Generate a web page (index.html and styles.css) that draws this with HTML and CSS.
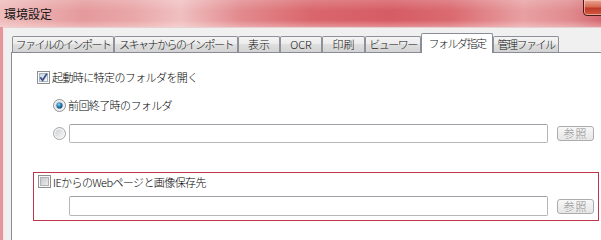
FILE: index.html
```html
<!DOCTYPE html>
<html lang="ja">
<head>
<meta charset="utf-8">
<title>環境設定</title>
<link rel="stylesheet" href="styles.css">
</head>
<body>
<div class="window">
  <div class="titlebar">
    <span class="title">環境設定</span>
    <div class="close"></div>
  </div>
  <div class="frame">
    <div class="client">
      <div class="tabs">
        <div class="tab t1">ファイルのインポート</div>
        <div class="tab t2">スキャナからのインポート</div>
        <div class="tab t3">表示</div>
        <div class="tab t4">OCR</div>
        <div class="tab t5">印刷</div>
        <div class="tab t6">ビューワー</div>
        <div class="tab t7 selected">フォルダ指定</div>
        <div class="tab t8">管理ファイル</div>
      </div>
      <div class="panel">
        <div class="row row-a">
          <svg class="cb" width="13" height="13" viewBox="0 0 13 13">
            <defs><linearGradient id="cbg1" x1="0" y1="0" x2="1" y2="1"><stop offset="0" stop-color="#c9d2e0"/><stop offset="1" stop-color="#f4f6fa"/></linearGradient></defs>
            <rect x="0.5" y="0.5" width="12" height="12" fill="#fafafa" stroke="#8e8f8f"/>
            <rect x="2.5" y="2.5" width="8" height="8" fill="url(#cbg1)" stroke="#a9b3c4"/>
            <path d="M3.3 6.4 L5.6 9.2 L9.8 2.8" fill="none" stroke="#3c4f80" stroke-width="1.7"/>
          </svg>
          <span class="label">起動時に特定のフォルダを開く</span>
        </div>
        <div class="row row-b">
          <svg class="rb" width="13" height="13" viewBox="0 0 13 13">
            <defs>
              <radialGradient id="rdot" cx="0.4" cy="0.35" r="0.7"><stop offset="0" stop-color="#8fd0f5"/><stop offset="0.5" stop-color="#2a7fb8"/><stop offset="1" stop-color="#0d3f6a"/></radialGradient>
              <linearGradient id="rbg1" x1="0" y1="0" x2="1" y2="1"><stop offset="0" stop-color="#c8ccd2"/><stop offset="1" stop-color="#f6f6f6"/></linearGradient>
            </defs>
            <circle cx="6.5" cy="6.5" r="6" fill="#f4f4f4" stroke="#8e8f8f"/>
            <circle cx="6.5" cy="6.5" r="4.3" fill="url(#rbg1)"/>
            <circle cx="6.5" cy="6.5" r="3.1" fill="url(#rdot)"/>
          </svg>
          <span class="label">前回終了時のフォルダ</span>
        </div>
        <div class="row row-c">
          <svg class="rb" width="13" height="13" viewBox="0 0 13 13">
            <defs><linearGradient id="rbg2" x1="0" y1="0" x2="1" y2="1"><stop offset="0" stop-color="#cfd1d4"/><stop offset="1" stop-color="#f7f7f7"/></linearGradient></defs>
            <circle cx="6.5" cy="6.5" r="6" fill="#f4f4f4" stroke="#a4a5a6"/>
            <circle cx="6.5" cy="6.5" r="4.3" fill="url(#rbg2)"/>
          </svg>
          <div class="field"></div>
          <div class="btn">参照</div>
        </div>
        <div class="group">
          <div class="grow">
            <svg class="cb" width="13" height="13" viewBox="0 0 13 13">
              <defs><linearGradient id="cbg2" x1="0" y1="0" x2="1" y2="1"><stop offset="0" stop-color="#c4c6c9"/><stop offset="1" stop-color="#eeeeee"/></linearGradient></defs>
              <rect x="0.5" y="0.5" width="12" height="12" fill="#f7f7f7" stroke="#8e8f8f"/>
              <rect x="2.5" y="2.5" width="8" height="8" fill="url(#cbg2)" stroke="#b0b3b7"/>
            </svg>
            <span class="label">IEからのWebページと画像保存先</span>
          </div>
          <div class="grow2">
            <div class="field"></div>
            <div class="btn">参照</div>
          </div>
        </div>
      </div>
    </div>
  </div>
</div>
</body>
</html>
```
FILE: styles.css
```css
* { box-sizing: border-box; }
html {
  margin: 0;
  padding: 0;
  background: #ffffff;
}
body {
  margin: 0;
  padding: 0;
  width: 601px;
  height: 100vh;
  min-height: 226px;
  overflow: hidden;
  font-family: "Noto Sans CJK JP", "Noto Sans", sans-serif;
  font-size: 11px;
  font-weight: 300;
  color: #000;
}
.window {
  display: flex;
  flex-direction: column;
  height: 100%;
  background: #e4979a;
}
.titlebar {
  position: relative;
  flex: none;
  height: 27px;
  display: flex;
  align-items: center;
  padding-left: 4px;
  background:
    linear-gradient(to bottom, rgba(255,255,255,0.18), rgba(255,255,255,0) 40%, rgba(255,255,255,0) 75%, rgba(255,235,235,0.35)),
    linear-gradient(to right, #efbcbc 0%, #e59a9c 14%, #e9a6a8 22%, #f0c0c0 30%, #e28a8e 40%, #d9666c 52%, #d65c64 65%, #da6a70 75%, #e8a0a2 87%, #e08a8e 95%, #d56870 100%);
}
.title {
  font-size: 12px;
  font-weight: 400;
  line-height: 14px;
  color: #141414;
}
.close {
  position: absolute;
  top: -1px;
  right: -9px;
  width: 27px;
  height: 17px;
  border: 1px solid #4e1c18;
  border-radius: 0 0 4px 4px;
  background: linear-gradient(#eba597, #d66a52 45%, #c0392a 55%, #cf5a40);
  box-shadow: inset 0 0 0 1px rgba(255,210,200,0.6);
}
.frame {
  flex: 1;
  display: flex;
  padding-left: 3px;
  min-height: 0;
}
.client {
  flex: 1;
  background: #f0f0f0;
  border-left: 1px solid #f6e4e4;
  border-top: 1px solid #e7d0d0;
  padding: 5px 0 0 7px;
  display: flex;
  flex-direction: column;
  min-height: 0;
}
.tabs {
  flex: none;
  display: flex;
  align-items: flex-end;
  height: 19px;
  padding-left: 1px;
  position: relative;
  z-index: 1;
}
.tab {
  flex: none;
  height: 16px;
  line-height: 14px;
  text-align: center;
  white-space: nowrap;
  letter-spacing: -1.5px;
  border: 1px solid #8e9199;
  border-bottom: none;
  border-radius: 2px 2px 0 0;
  background: linear-gradient(#f4f4f4, #ececec 45%, #dedede 50%, #d3d3d3);
  color: #111;
  overflow: hidden;
}
.t1 { width: 102px; }
.t2 { width: 124px; }
.t3 { width: 42px; letter-spacing: 0; }
.t4 { width: 42px; letter-spacing: 0; }
.t5 { width: 43px; letter-spacing: 0; }
.t6 { width: 56px; }
.t7 { width: 72px; }
.t8 { width: 66px; }
.tab.selected {
  height: 20px;
  margin-bottom: -1px;
  padding-top: 2px;
  background: #fff;
  border-color: #898c95;
}
.panel {
  flex: 1;
  background: #fff;
  border: 1px solid #898c95;
  border-right: none;
  border-bottom: none;
  display: flex;
  flex-direction: column;
}
.row {
  display: flex;
  align-items: center;
  flex: none;
}
.label {
  line-height: 14px;
  white-space: nowrap;
  letter-spacing: -0.6px;
}
.row-a {
  height: 20px;
  margin-top: 14px;
  padding-left: 25px;
  gap: 2px;
}
.row-b {
  height: 20px;
  margin-top: 8px;
  padding-left: 41px;
  gap: 2px;
}
.row-c {
  height: 19px;
  margin-top: 9px;
  padding-left: 41px;
}
.cb, .rb { flex: none; display: block; }
.row-c .field { margin-left: 3px; height: 19px; }
.field {
  width: 479px;
  background: #fff;
  border: 1px solid #b4b6ba;
  border-top-color: #9fa1a6;
  border-radius: 2px;
  flex: none;
}
.btn {
  flex: none;
  width: 37px;
  height: 15px;
  margin-left: 9px;
  border: 1px solid #a9adb0;
  border-radius: 3px;
  background: linear-gradient(#f8f8f8, #efefef 50%, #e6e6e6);
  color: #8a8a8a;
  font-size: 11px;
  line-height: 13px;
  text-align: center;
  letter-spacing: 1px;
}
.group {
  flex: none;
  width: 566px;
  height: 49px;
  margin-top: 29px;
  margin-left: 21px;
  border: 1px solid #c0354e;
  display: flex;
  flex-direction: column;
}
.grow {
  display: flex;
  align-items: center;
  height: 17px;
  padding-left: 4px;
  gap: 2px;
}
.grow2 {
  display: flex;
  align-items: center;
  margin-top: 6px;
  padding-left: 35px;
}
.grow2 .field { height: 20px; }
```
